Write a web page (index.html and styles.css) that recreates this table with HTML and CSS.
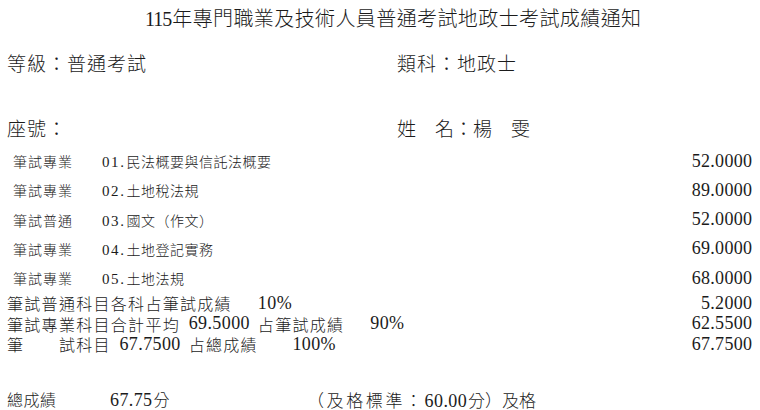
FILE: index.html
```html
<!DOCTYPE html>
<html lang="zh-Hant">
<head>
<meta charset="utf-8">
<title>成績通知</title>
<link rel="stylesheet" href="styles.css">
</head>
<body>
<div class="page">
  <h1 class="title"><span class="title-num">115</span>年專門職業及技術人員普通考試地政士考試成績通知</h1>

  <div class="head-row first">
    <div class="head-left">等級：普通考試</div>
    <div class="head-right">類科：地政士</div>
  </div>
  <div class="head-row second">
    <div class="head-left">座號：</div>
    <div class="head-right name">姓　名：楊　雯</div>
  </div>

  <div class="courses">
    <div class="course">
      <span class="c-type">筆試專業</span>
      <span class="c-name"><span class="c-no">01.</span>民法概要與信託法概要</span>
      <span class="num score">52.0000</span>
    </div>
    <div class="course">
      <span class="c-type">筆試專業</span>
      <span class="c-name"><span class="c-no">02.</span>土地稅法規</span>
      <span class="num score">89.0000</span>
    </div>
    <div class="course">
      <span class="c-type">筆試普通</span>
      <span class="c-name"><span class="c-no">03.</span>國文（作文）</span>
      <span class="num score">52.0000</span>
    </div>
    <div class="course">
      <span class="c-type">筆試專業</span>
      <span class="c-name"><span class="c-no">04.</span>土地登記實務</span>
      <span class="num score">69.0000</span>
    </div>
    <div class="course">
      <span class="c-type">筆試專業</span>
      <span class="c-name"><span class="c-no">05.</span>土地法規</span>
      <span class="num score">68.0000</span>
    </div>
  </div>

  <div class="summary">
    <div class="sum-line">
      <span class="seg u29">筆試普通科目各科占筆試成績</span>
      <span class="seg num">10%</span>
      <span class="num score">5.2000</span>
    </div>
    <div class="sum-line">
      <span class="seg u21">筆試專業科目合計平均</span>
      <span class="seg u8 num">69.5000</span>
      <span class="seg u13">占筆試成績</span>
      <span class="seg num">90%</span>
      <span class="num score">62.5500</span>
    </div>
    <div class="sum-line">
      <span class="seg u6">筆</span>
      <span class="seg u7">試科目</span>
      <span class="seg u8 num">67.7500</span>
      <span class="seg u12">占總成績</span>
      <span class="seg num">100%</span>
      <span class="num score">67.7500</span>
    </div>
  </div>

  <div class="total">
    <span class="t-label">總成績</span>
    <span class="t-score"><span class="num">67.75</span>分</span>
    <span class="t-note"><span class="t-std">（及格標準：</span><span class="num">60.00</span>分）及格</span>
  </div>
</div>
</body>
</html>
```

FILE: styles.css
```css
html, body {
  margin: 0;
  padding: 0;
  background: #ffffff;
}

body {
  font-family: "Liberation Serif", "Noto Sans CJK TC", sans-serif;
  color: #1b1b1b;
  font-weight: 300;
}

.page {
  width: 760px;
  height: 410px;
  box-sizing: border-box;
  padding: 0 8px 0 7px;
  overflow: hidden;
}

.title {
  margin: 0;
  height: 38px;
  line-height: 38px;
  font-size: 20px;
  font-weight: 300;
  letter-spacing: 0.4px;
  padding-left: 138px;
  white-space: nowrap;
}

.title-num {
  letter-spacing: -1px;
  margin-right: 1px;
}

.head-row {
  display: flex;
  height: 30px;
  line-height: 30px;
  font-size: 19px;
  letter-spacing: 1px;
}

.head-row.first {
  margin-top: 12px;
}

.head-row.second {
  margin-top: 35px;
}

.head-left {
  width: 390px;
  flex: none;
}

.head-right.name {
  letter-spacing: 0;
}

.courses {
  margin-top: 1.5px;
}

.course {
  display: flex;
  align-items: center;
  height: 29.25px;
  padding-left: 6px;
}

.c-type {
  width: 89px;
  flex: none;
  font-size: 14px;
  letter-spacing: 1px;
}

.c-name {
  flex: 1;
  font-size: 14px;
  letter-spacing: 0.5px;
}

.c-no {
  font-size: 15px;
  letter-spacing: 1.6px;
  margin-right: 1px;
}

.num {
  font-size: 18px;
  letter-spacing: 0.4px;
}

.score {
  margin-left: auto;
  letter-spacing: 0.3px;
  margin-right: -0.3px;
}

.summary {
  font-size: 16px;
  letter-spacing: 1.3px;
}

.sum-line {
  display: flex;
  align-items: center;
  height: 20.5px;
  white-space: nowrap;
}

.seg {
  flex: none;
}

.u6 { width: 51.9px; }
.u7 { width: 60.55px; }
.u8 { width: 69.2px; }
.u12 { width: 103.8px; }
.u13 { width: 112.45px; }
.u21 { width: 181.65px; }
.u29 { width: 250.85px; }

.total {
  display: flex;
  align-items: center;
  height: 24px;
  margin-top: 33px;
  font-size: 16px;
  white-space: nowrap;
}

.t-label {
  width: 103px;
  flex: none;
  letter-spacing: 0.5px;
}

.t-score {
  width: 197px;
  flex: none;
}

.t-score .num {
  margin-right: 1px;
}

.t-note {
  font-size: 17px;
}

.t-std {
  letter-spacing: 2.6px;
}

.t-note .num {
  margin-right: 1px;
}
```
